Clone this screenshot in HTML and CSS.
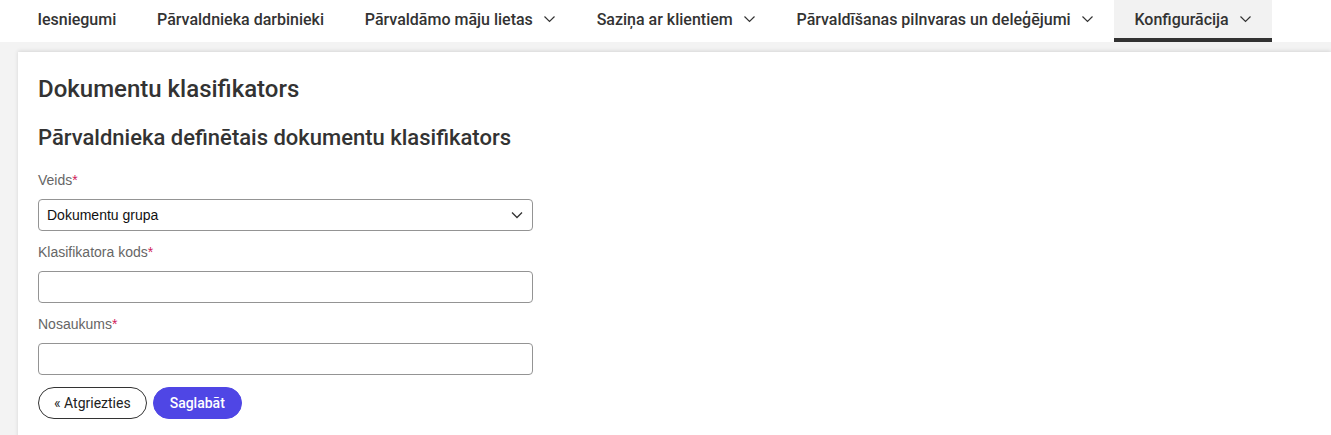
FILE: index.html
```html
<!DOCTYPE html>
<html lang="lv">
<head>
<meta charset="utf-8">
<title>Dokumentu klasifikators</title>
<link rel="stylesheet" href="styles.css">
</head>
<body>
<nav class="topnav">
  <a class="nav-item">Iesniegumi</a>
  <a class="nav-item">Pārvaldnieka darbinieki</a>
  <a class="nav-item">Pārvaldāmo māju lietas <svg class="chev" viewBox="0 0 12 8"><path d="M1 1.5l5 5 5-5" fill="none" stroke="#333" stroke-width="1.2"/></svg></a>
  <a class="nav-item">Saziņa ar klientiem <svg class="chev" viewBox="0 0 12 8"><path d="M1 1.5l5 5 5-5" fill="none" stroke="#333" stroke-width="1.2"/></svg></a>
  <a class="nav-item">Pārvaldīšanas pilnvaras un deleģējumi <svg class="chev" viewBox="0 0 12 8"><path d="M1 1.5l5 5 5-5" fill="none" stroke="#333" stroke-width="1.2"/></svg></a>
  <a class="nav-item active">Konfigurācija <svg class="chev" viewBox="0 0 12 8"><path d="M1 1.5l5 5 5-5" fill="none" stroke="#333" stroke-width="1.2"/></svg></a>
</nav>
<main class="page">
  <section class="card">
    <h1 class="title">Dokumentu klasifikators</h1>
    <h2 class="subtitle">Pārvaldnieka definētais dokumentu klasifikators</h2>
    <form class="form">
      <label class="label">Veids<span class="req">*</span></label>
      <div class="select">
        <span>Dokumentu grupa</span>
        <svg class="select-chev" viewBox="0 0 12 8"><path d="M1 1.5l5 5 5-5" fill="none" stroke="#333" stroke-width="1.3"/></svg>
      </div>
      <label class="label">Klasifikatora kods<span class="req">*</span></label>
      <input class="input" type="text">
      <label class="label">Nosaukums<span class="req">*</span></label>
      <input class="input" type="text">
      <div class="actions">
        <button type="button" class="btn btn-outline">« Atgriezties</button>
        <button type="button" class="btn btn-primary">Saglabāt</button>
      </div>
    </form>
  </section>
</main>
</body>
</html>
```
FILE: styles.css
```css
* { box-sizing: border-box; }
html, body { margin: 0; padding: 0; }
body {
  background: #f3f3f3;
  font-family: Roboto, "Liberation Sans", Arial, sans-serif;
  color: #333;
  overflow: hidden;
}
.topnav {
  display: flex;
  height: 42px;
  padding-left: 17px;
  background: #fff;
}
.nav-item {
  display: flex;
  align-items: center;
  gap: 10px;
  padding: 0 20.4px;
  font-size: 16px;
  font-weight: 500;
  color: #333;
  border-bottom: 4px solid transparent;
  white-space: nowrap;
}
.nav-item.active {
  background: #f2f2f2;
  border-bottom-color: #333;
}
.chev { width: 13px; height: 8px; }
.page {
  padding: 10px 0 0 18px;
}
.card {
  background: #fff;
  box-shadow: 0 -1px 4px rgba(0,0,0,0.12);
  padding: 22px 20px 20px 20px;
  min-height: 400px;
}
.title {
  margin: 0;
  font-size: 24px;
  font-weight: 500;
  line-height: 30px;
  color: #333;
}
.subtitle {
  margin: 19px 0 0 0;
  font-size: 22px;
  font-weight: 500;
  line-height: 30px;
  color: #333;
}
.form {
  display: flex;
  flex-direction: column;
  width: 495px;
  margin-top: 18px;
}
.label {
  font-family: "Liberation Sans", Arial, sans-serif;
  font-size: 14px;
  line-height: 18px;
  color: #666;
  margin-bottom: 10px;
}
.req { color: #d0205a; }
.select, .input {
  height: 32px;
  border: 1px solid #949494;
  border-radius: 4px;
  background: #fff;
  margin-bottom: 12px;
}
.select {
  display: flex;
  align-items: center;
  justify-content: space-between;
  padding: 0 9px 0 8px;
  font-family: "Liberation Sans", Arial, sans-serif;
  font-size: 14px;
  color: #111;
}
.select-chev { width: 12px; height: 8px; }
.input { width: 100%; padding: 0 8px; font-size: 14px; }
.actions {
  display: flex;
  gap: 6px;
}
.btn {
  height: 32px;
  border-radius: 16px;
  font-family: Roboto, sans-serif;
  font-size: 14px;
  font-weight: 400;
  padding: 0 15px;
  white-space: nowrap;
  cursor: pointer;
}
.btn-outline {
  background: #fff;
  border: 1px solid #333;
  color: #222;
}
.btn-primary {
  background: #4f46e5;
  border: 1px solid #4f46e5;
  color: #fff;
  font-weight: 500;
  padding: 0 16px;
}
```
